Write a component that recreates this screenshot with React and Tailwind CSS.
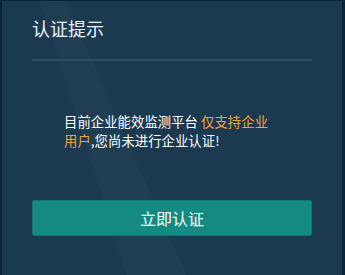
export default function App() {
  return (
    <div
      className="relative w-[345px] h-[275px] overflow-hidden bg-[#1b3a50] border-t border-l-2 border-r-[3px] border-[#0b2438]"
      style={{ fontFamily: '"Noto Sans CJK SC", "Noto Sans", sans-serif' }}
    >
      <div className="pointer-events-none absolute inset-0">
        <svg width="345" height="275" className="absolute inset-0">
          <polygon points="38,0 64,0 185,275 125,275" fill="#ffffff" fillOpacity="0.018" />
        </svg>
      </div>
      <div className="relative flex flex-col px-[30px]">
        <div className="pt-[15px] pb-[19px] text-[18px] leading-[24px] text-[#eef3f6]">认证提示</div>
        <div className="h-[2px] bg-[#2e4f63]" />
        <div className="pt-[52px] pl-[32px] w-[246px] text-[13.3px] leading-[18.5px] text-white tracking-[0.1px]">
          目前企业能效监测平台 <span className="text-[#f2a23a]">仅支持企业用户</span>,您尚未进行企业认证!
        </div>
        <button className="mt-[50px] h-[36px] rounded-[2px] border border-[#11756f] bg-[#148a82] text-[16px] text-white">
          立即认证
        </button>
      </div>
    </div>
  );
}
